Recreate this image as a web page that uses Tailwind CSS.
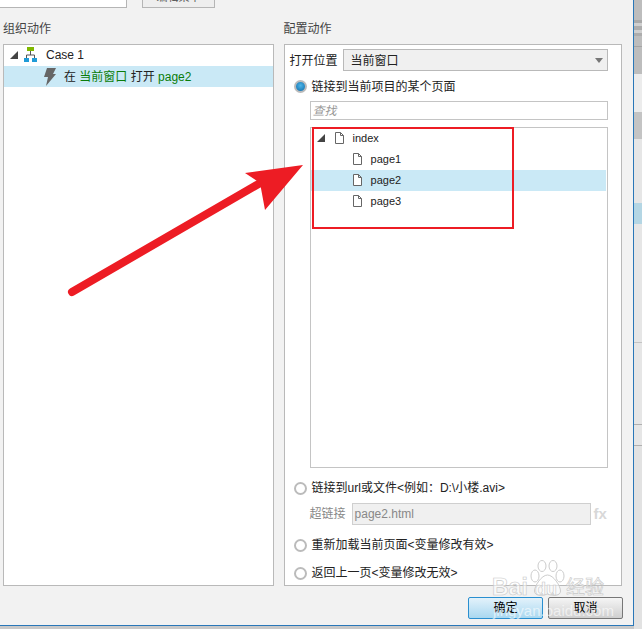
<!DOCTYPE html>
<html lang="zh-CN">
<head>
    <meta charset="UTF-8">
    <title>配置动作</title>
    <script src="https://cdn.jsdelivr.net/npm/@tailwindcss/browser@4"></script>
</head>
<body class="relative w-[642px] h-[629px] overflow-hidden bg-[#c9c9c9] font-['Liberation_Sans','Noto_Sans_CJK_SC',sans-serif] text-[12px] leading-[16px] text-[#222]">

    <div class="flex h-full">
        <!-- Dialog -->
        <div class="w-[634px] h-[626px] shrink-0 flex flex-col bg-[#f2f2f2] border-r border-b border-[#2a77b8]">
            <!-- Cut-off top row -->
            <div class="h-[8px] flex">
                <div class="w-[127px] h-[8px] bg-white border-r border-b border-[#b5b5b5]"></div>
                <div class="ml-[15px] w-[73px] h-[8px] bg-[#eee] border-x border-b border-[#b5b5b5] overflow-hidden flex justify-center items-start">
                    <span class="text-[11px] leading-[11px] text-[#555] -translate-y-[8px]">编辑菜单</span>
                </div>
            </div>

            <div class="flex pl-[3px] pr-[11px] gap-[10px]">
                <!-- Left column -->
                <div class="w-[271px]">
                    <div class="h-[36px] pt-[13px] text-[#444]">组织动作</div>
                    <div class="h-[542px] bg-white border border-[#b9b9b9]">
                        <div class="h-[21px] flex items-center pl-[6px] pb-[1px]">
                            <svg class="w-[8px] h-[8px]" viewBox="0 0 8 8"><path d="M8 0V8H0Z" fill="#444"/></svg>
                            <svg class="ml-[6px] w-[13px] h-[16px]" viewBox="0 0 13 16"><path d="M3 0h7v4H3z" fill="#7fb800"/><path d="M6.5 4v4M2.5 11V8h8v3" fill="none" stroke="#555"/><path d="M0 11h5v4H0zM8 11h5v4H8z" fill="#1f9bd7"/></svg>
                            <span class="ml-[9px]">Case 1</span>
                        </div>
                        <div class="h-[21px] flex items-center pl-[40px] bg-[#cae9f6]">
                            <svg class="w-[12px] h-[18px]" viewBox="0 0 12 18"><path d="M3 0h9L9 6h3L2 18l2-9H0Z" fill="#666"/></svg>
                            <span class="ml-[8px]">在 <span class="text-[#0a7d0a]">当前窗口</span> 打开 <span class="text-[#0a7d0a]">page2</span></span>
                        </div>
                    </div>
                </div>

                <!-- Right column -->
                <div class="w-[339px]">
                    <div class="h-[36px] pt-[13px] text-[#444]">配置动作</div>
                    <div class="h-[542px] bg-white border border-[#b9b9b9] pl-[5px] pr-[13px] pt-[4px] flex flex-col">
                        <div class="flex items-center h-[22px]">
                            <span class="w-[53px] pt-[2px]">打开位置</span>
                            <div class="flex-1 h-[22px] bg-[#f0f0f0] border border-[#b9b9b9] flex items-center justify-between pl-[7px] pr-[4px]">
                                <span class="pt-[1px]">当前窗口</span>
                                <svg class="w-[8px] h-[5px]" viewBox="0 0 8 5"><path d="M0 0h8L4 5Z" fill="#777"/></svg>
                            </div>
                        </div>
                        <div class="flex items-center h-[20px] mt-[5px] pl-[4px]">
                            <span class="w-[13px] h-[13px] rounded-full border-2 border-[#bbb] bg-[radial-gradient(circle_at_50%_40%,#4db5e8,#0f6aa8)]"></span>
                            <span class="ml-[5px] pt-[1px]">链接到当前项目的某个页面</span>
                        </div>
                        <div class="ml-[20px] mt-[5px] h-[19px] bg-white border border-[#c4c4c4] pl-[2px] flex items-center italic text-[#999]">查找</div>
                        <!-- Page tree -->
                        <div class="ml-[20px] mt-[7px] h-[341px] border border-[#c4c4c4] text-[11px]">
                            <div class="h-[21px] flex items-center pl-[6px] pb-[1px]">
                                <svg class="w-[8px] h-[8px]" viewBox="0 0 8 8"><path d="M8 0V8H0Z" fill="#444"/></svg>
                                <svg class="ml-[10px] w-[9px] h-[12px]" viewBox="0 0 9 12"><path d="M.5.5h5l3 3v8h-8ZM5.5.5v3h3" fill="#fff" stroke="#666"/></svg>
                                <span class="ml-[9px]">index</span>
                            </div>
                            <div class="h-[21px] flex items-center pl-[42px] pb-[1px]">
                                <svg class="w-[9px] h-[12px]" viewBox="0 0 9 12"><path d="M.5.5h5l3 3v8h-8ZM5.5.5v3h3" fill="#fff" stroke="#666"/></svg>
                                <span class="ml-[9px]">page1</span>
                            </div>
                            <div class="h-[21px] flex items-center pl-[42px] pb-[1px] bg-[#cae9f6] mr-[1px]">
                                <svg class="w-[9px] h-[12px]" viewBox="0 0 9 12"><path d="M.5.5h5l3 3v8h-8ZM5.5.5v3h3" fill="#fff" stroke="#666"/></svg>
                                <span class="ml-[9px]">page2</span>
                            </div>
                            <div class="h-[21px] flex items-center pl-[42px] pb-[1px]">
                                <svg class="w-[9px] h-[12px]" viewBox="0 0 9 12"><path d="M.5.5h5l3 3v8h-8ZM5.5.5v3h3" fill="#fff" stroke="#666"/></svg>
                                <span class="ml-[9px]">page3</span>
                            </div>
                        </div>
                        <div class="flex items-center h-[20px] mt-[10px] pl-[4px]">
                            <span class="w-[13px] h-[13px] rounded-full border-2 border-[#bbb] bg-white"></span>
                            <span class="ml-[5px]">链接到url或文件&lt;例如：D:\小楼.avi&gt;</span>
                        </div>
                        <div class="flex items-center h-[22px] mt-[5px] pl-[20px] text-[#888]">
                            <span class="w-[42px]">超链接</span>
                            <div class="w-[239px] h-[22px] bg-[#f0f0f0] border border-[#cfcfcf] pl-[2px] flex items-center">page2.html</div>
                            <span class="ml-[3px] font-bold text-[15px] text-[#d8d8d8]">fx</span>
                        </div>
                        <div class="flex items-center h-[20px] mt-[10px] pl-[4px]">
                            <span class="w-[13px] h-[13px] rounded-full border-2 border-[#bbb] bg-white"></span>
                            <span class="ml-[5px]">重新加载当前页面&lt;变量修改有效&gt;</span>
                        </div>
                        <div class="flex items-center h-[20px] mt-[8px] pl-[4px]">
                            <span class="w-[13px] h-[13px] rounded-full border-2 border-[#bbb] bg-white"></span>
                            <span class="ml-[5px]">返回上一页&lt;变量修改无效&gt;</span>
                        </div>
                    </div>
                </div>
            </div>

            <!-- Footer buttons -->
            <div class="flex justify-end gap-[5px] pr-[10px] mt-[11px]">
                <div class="w-[75px] h-[22px] rounded-[2px] border border-[#2a8fd0] bg-linear-to-b from-[#e3f2fb] to-[#a9d8f0] flex items-center justify-center text-black">确定</div>
                <div class="w-[75px] h-[22px] rounded-[2px] border border-[#777] bg-linear-to-b from-[#f5f5f5] to-[#cfcfcf] flex items-center justify-center text-black">取消</div>
            </div>
        </div>

        <!-- Window behind the dialog -->
        <div class="flex-1 flex flex-col">
            <div class="h-[20px] bg-[#bdbdbd]"></div>
            <div class="h-[3px] bg-[#a9a9a9]"></div>
            <div class="h-[3px] bg-[#cfcfcf]"></div>
            <div class="h-[4px] bg-[#adadad]"></div>
            <div class="h-[3px] bg-[#cfcfcf]"></div>
            <div class="h-[3px] bg-[#adadad]"></div>
            <div class="h-[11px] bg-[#bdbdbd] border-b border-[#a5a5a5]"></div>
            <div class="h-[27px] bg-[#bdbdbd]"></div>
            <div class="h-[38px] bg-[#ececec]"></div>
            <div class="h-[27px] bg-[#c4c4c4]"></div>
            <div class="h-[64px] bg-[#e6e6e6]"></div>
            <div class="h-[21px] bg-[#b4d6e4]"></div>
            <div class="h-[119px] bg-[#e6e6e6] border-b border-[#c4c4c4]"></div>
            <div class="h-[82px] bg-[#e6e6e6] border-b border-[#b0b0b0]"></div>
            <div class="h-[21px] bg-[#e6e6e6] border-b border-[#b0b0b0]"></div>
            <div class="flex-1 bg-[#e2e2e2]"></div>
        </div>
    </div>

    <!-- Red annotations drawn over the screenshot -->
    <div class="absolute left-[312px] top-[127px] w-[202px] h-[102px] border-2 border-[#ed1c24]"></div>
    <svg class="absolute left-0 top-0 w-[642px] h-[629px] pointer-events-none" viewBox="0 0 642 629">
        <path d="M72 292L262 182" stroke="#ed1c24" stroke-width="8" stroke-linecap="round"/>
        <path d="M303 165L245 173L260 183L265 210Z" fill="#ed1c24"/>
    </svg>

    <!-- Watermark -->
    <div class="absolute left-[490px] top-[556px] w-[120px] h-[62px] pointer-events-none">
        <svg class="absolute left-[40px] top-[4px] w-[35px] h-[37px]" viewBox="0 0 35 37" fill="#fff" fill-opacity=".55" stroke="#ccc" stroke-width="1"><ellipse cx="5" cy="16" rx="4" ry="6"/><ellipse cx="12" cy="6" rx="4" ry="5.5"/><ellipse cx="23" cy="6" rx="4" ry="5.5"/><ellipse cx="30" cy="16" rx="4" ry="6"/><path d="M17.500 15c6 0 13 11 13 16s-7 5-13 3c-6 2-13 2-13-3s7-16 13-16Z"/></svg>
        <span class="absolute left-[2px] top-[17px] text-[23px] leading-[28px] font-bold text-white/55 [-webkit-text-stroke:0.6px_#c8c8c8]">Bai</span>
        <span class="absolute left-[45px] top-[23px] text-[18px] leading-[20px] font-bold text-white/55 [-webkit-text-stroke:0.6px_#c8c8c8]">du</span>
        <span class="absolute left-[76px] top-[20px] text-[19px] leading-[24px] text-white/55 [-webkit-text-stroke:0.6px_#c8c8c8]">经验</span>
        <span class="absolute left-[3px] top-[46px] text-[15px] leading-[18px] text-white/60">jingyan.baidu.com</span>
    </div>

</body>
</html>
